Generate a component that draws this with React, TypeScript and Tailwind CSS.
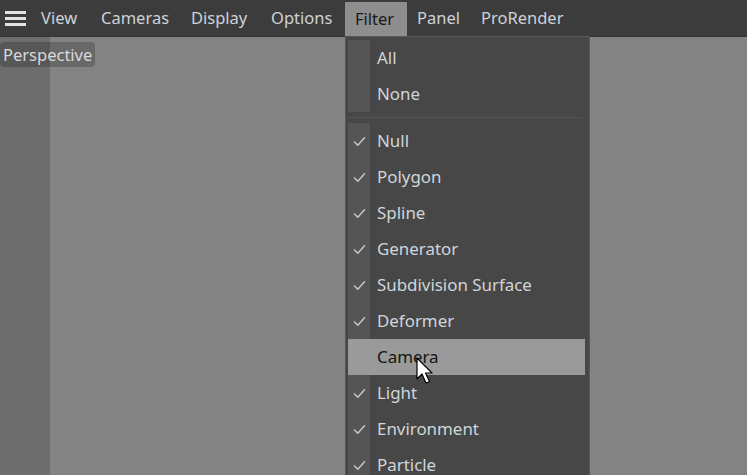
import React from "react";

const menus = [
  { label: "View", w: "w-[60px]" },
  { label: "Cameras", w: "w-[90px]" },
  { label: "Display", w: "w-[80px]" },
  { label: "Options", w: "w-[84px]" },
  { label: "Filter", w: "w-[62px]", active: true },
  { label: "Panel", w: "w-[64px]" },
  { label: "ProRender", w: "w-[100px]" },
];

const items: { label: string; checked: boolean; hover?: boolean }[] = [
  { label: "Null", checked: true },
  { label: "Polygon", checked: true },
  { label: "Spline", checked: true },
  { label: "Generator", checked: true },
  { label: "Subdivision Surface", checked: true },
  { label: "Deformer", checked: true },
  { label: "Camera", checked: false, hover: true },
  { label: "Light", checked: true },
  { label: "Environment", checked: true },
  { label: "Particle", checked: true },
];

function Check() {
  return (
    <svg width="13" height="11" viewBox="0 0 13 11" fill="none">
      <path d="M1.5 6 L4.8 9.2 L11.5 1.8" stroke="#c4c4c4" strokeWidth="1.6" strokeLinecap="round" strokeLinejoin="round" />
    </svg>
  );
}

function Row({ label, checked, hover }: { label: string; checked: boolean; hover?: boolean }) {
  return (
    <div className={`flex h-[36px] items-center ${hover ? "bg-[#9a9a9a]" : ""}`}>
      <div className={`flex h-full w-[22px] shrink-0 items-center justify-center ${hover ? "" : "bg-[#555555]"}`}>
        {checked ? <Check /> : null}
      </div>
      <span className={`pl-[7px] text-[16.9px] ${hover ? "text-[#151515]" : "text-[#cfd5da]"}`}>{label}</span>
    </div>
  );
}

export default function App() {
  return (
    <div
      className="relative flex h-[475px] w-[747px] flex-col overflow-hidden bg-[#838383]"
      style={{ fontFamily: '"Noto Sans", "Open Sans", sans-serif' }}
    >
      {/* Menu bar */}
      <div className="flex h-[37px] shrink-0 items-stretch bg-[#3c3c3c] border-b border-[#333333]">
        <div className="flex w-[31px] flex-col justify-center gap-[3px] pl-[5px]">
          <div className="h-[3px] w-[21px] bg-[#e2e2e2]" />
          <div className="h-[3px] w-[21px] bg-[#e2e2e2]" />
          <div className="h-[3px] w-[21px] bg-[#e2e2e2]" />
        </div>
        {menus.map((m) => (
          <div
            key={m.label}
            className={`flex items-center pl-[10px] text-[16.5px] ${m.w} ${
              m.active ? "mt-[2px] bg-[#8e8e8e] text-[#1a1a1a]" : "text-[#cdd3d8]"
            }`}
          >
            {m.label}
          </div>
        ))}
      </div>

      {/* Viewport */}
      <div className="flex flex-1">
        <div className="w-[50px] bg-[#6d6d6d]" />
        <div className="flex-1 bg-[#838383]" />
      </div>

      {/* Perspective label */}
      <div className="absolute left-0 top-[42px] rounded-[4px] bg-black/20 px-[3px] py-[1px] text-[16.5px] leading-[23px] text-[#d9d9d9]">
        Perspective
      </div>

      {/* Dropdown */}
      <div className="absolute left-[345px] top-[36px] h-[450px] w-[245px] border border-[#575757] bg-[#474747] pl-[2px] pr-[4px] pt-[3px]">
        <div>
          <Row label="All" checked={false} />
          <Row label="None" checked={false} />
        </div>
        <div className="flex h-[11px] items-center pr-[3px]">
          <div className="h-[1px] w-full bg-[#555555]" />
        </div>
        <div>
          {items.map((it) => (
            <Row key={it.label} {...it} />
          ))}
        </div>
      </div>

      {/* Cursor */}
      <svg className="absolute left-[416px] top-[357px]" width="20" height="28" viewBox="0 0 20 28">
        <path
          d="M1 1 L1 22 L6 17 L10 26 L13.5 24.5 L9.5 16 L16 16 Z"
          fill="#ffffff"
          stroke="#000000"
          strokeWidth="1.2"
          strokeLinejoin="round"
        />
      </svg>
    </div>
  );
}
